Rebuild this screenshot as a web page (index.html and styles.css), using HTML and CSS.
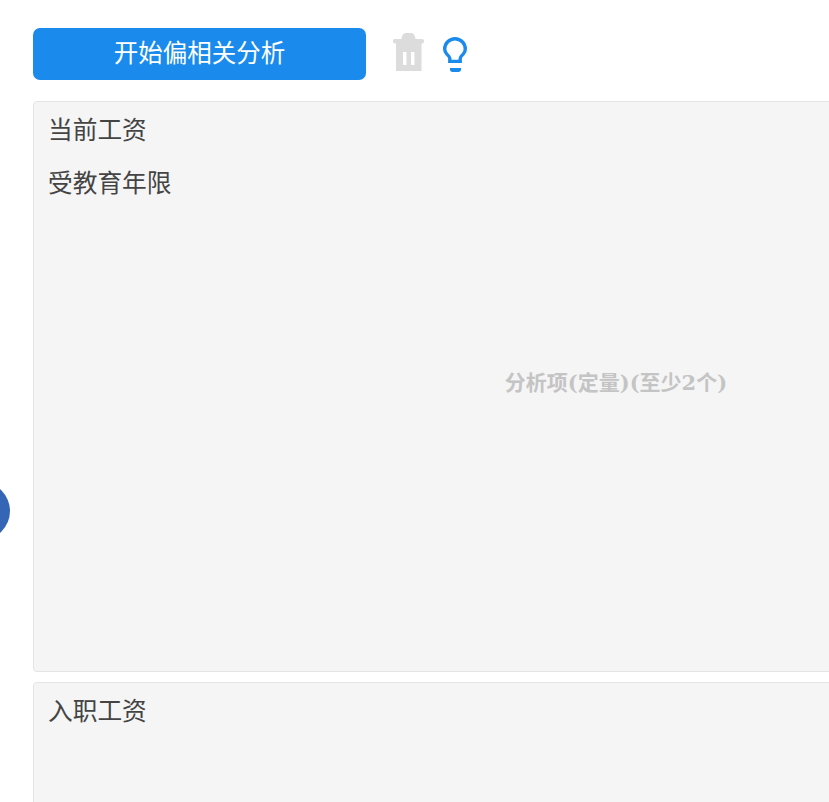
FILE: index.html
```html
<!DOCTYPE html>
<html lang="zh">
<head>
<meta charset="utf-8">
<title>偏相关分析</title>
<link rel="stylesheet" href="styles.css">
</head>
<body>
<div class="side-dot"></div>
<main class="panel">
  <div class="toolbar">
    <button class="start">开始偏相关分析</button>
    <svg class="icon-trash" viewBox="0 0 31 38" aria-hidden="true">
      <path d="M8.500 6C9 2 10.500 0 12.500 0h6c2 0 3.500 2 4 6h6.500c1.200 0 2 .9 2 2.200s-.8 2.300-2 2.300H2C.8 10.500 0 9.500 0 8.200S.8 6 2 6z"/>
      <path fill-rule="evenodd" d="M3 10h25.500v28H3zM10 19v13h3.500V19zM18 19v13h3.500V19z"/>
    </svg>
    <svg class="icon-bulb" viewBox="0 0 24 35" aria-hidden="true">
      <path class="bulb-line" d="M6.800 24.400V21.500C6.800 19.500 5 18.500 3.700 17 2.400 15.500 1.700 13.800 1.700 12A10.300 10.300 0 0 1 22.300 12C22.300 13.800 21.600 15.500 20.300 17 19 18.500 17.200 19.500 17.200 21.500V24.400Z"/>
      <path class="bulb-base" d="M7 31h11v1.500c0 1.500-1 2.500-2.500 2.500h-6C8 35 7 34 7 32.500z"/>
    </svg>
  </div>
  <section class="dropbox dropbox-main">
    <div class="item">当前工资</div>
    <div class="item">受教育年限</div>
    <div class="hint">分析项(定量)(至少2个)</div>
  </section>
  <section class="dropbox dropbox-second">
    <div class="item">入职工资</div>
  </section>
</main>
</body>
</html>
```
FILE: styles.css
```css
html, body {
  margin: 0;
  padding: 0;
  height: 802px;
  overflow: hidden;
  background: #fff;
}
body {
  position: relative;
  font-family: "Liberation Sans", "Noto Sans CJK SC", sans-serif;
  color: #444;
}
.side-dot {
  position: absolute;
  left: -48px;
  top: 482px;
  width: 58px;
  height: 58px;
  border-radius: 50%;
  background: #3566b5;
}
.panel {
  width: 1166px;
  padding: 28px 0 0 33px;
}
.toolbar {
  display: flex;
  align-items: flex-start;
  height: 52px;
  margin-bottom: 21px;
}
.start {
  width: 333px;
  height: 52px;
  border: 0;
  border-radius: 7px;
  background: #1a8bec;
  color: #fff;
  font: 24.5px/52px "Liberation Sans", "Noto Sans CJK SC", sans-serif;
  padding: 0;
}
.icon-trash {
  width: 31px;
  height: 38px;
  margin: 5px 0 0 27px;
  fill: #dcdcdc;
  flex: none;
}
.icon-bulb {
  width: 24px;
  height: 35px;
  margin: 9px 0 0 19px;
  flex: none;
}
.bulb-line {
  fill: none;
  stroke: #1a8bec;
  stroke-width: 3.4;
}
.bulb-base {
  fill: #1a8bec;
}
.dropbox {
  position: relative;
  box-sizing: border-box;
  background: #f5f5f5;
  border: 1px solid #e4e4e4;
  border-radius: 4px;
  padding: 2px 14px;
}
.dropbox-main {
  height: 571px;
  margin-bottom: 10px;
}
.dropbox-second {
  height: 200px;
}
.item {
  font-size: 24.7px;
  line-height: 53px;
  height: 53px;
}
.hint {
  position: absolute;
  left: 0;
  right: 0;
  top: 50%;
  text-align: center;
  transform: translateY(-16px);
  font: bold 21px/24px "DejaVu Serif", "Noto Sans CJK SC", serif;
  color: #c4c4c4;
}
```
